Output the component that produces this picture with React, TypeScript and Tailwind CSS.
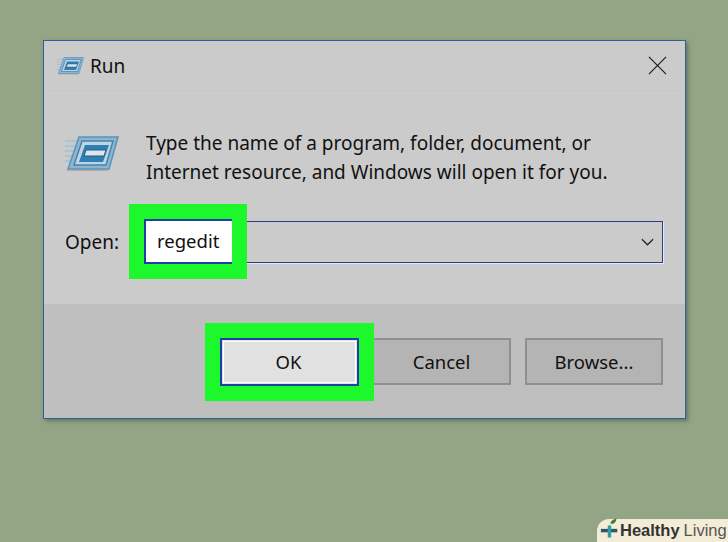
const font = "font-['Noto_Sans','Open_Sans',sans-serif]";

function RunIcon({ className }: { className: string }) {
  return (
    <svg viewBox="0 0 54 36" className={className}>
      <path d="M0 5h15M0 10h13M0 15h11M0 20h9M0 25h7" stroke="#a9c4d6" strokeWidth="2" />
      <path d="M14 1H53L44 33H3Z" fill="#8db5cf" stroke="#5b93b8" strokeWidth="1.5" />
      <path d="M44 33H3L1 35H43Z" fill="#9a9a9a" opacity="0.6" />
      <path d="M17 5H48L41 29H9Z" fill="#c3d3de" stroke="#3f86b4" strokeWidth="1.5" />
      <path d="M20 9H44L38 26H14Z" fill="#2f7fb4" />
      <path d="M21 14H41L39 20H19Z" fill="#dfe6ea" stroke="#1f5f8c" strokeWidth="1" />
    </svg>
  );
}

function DialogButton({ label, className }: { label: string; className: string }) {
  return <button className={`text-[18.5px] text-[#111] ${className}`}>{label}</button>;
}

export default function App() {
  return (
    <div className={`relative h-[542px] w-[728px] overflow-hidden bg-[#93a584] pl-[43px] pt-[40px] ${font}`}>
      <div className="flex h-[379px] w-[643px] flex-col border border-[#2f5f9f] bg-[#cbcbcb] shadow-[2px_2px_4px_rgba(50,70,60,0.5)]">
        <div className="flex h-[50px] items-center border-b border-[#c7c7c7] pl-[13px] pr-[18px]">
          <RunIcon className="h-[18px] w-[27px]" />
          <span className="ml-[6px] mt-[2px] text-[19px] leading-none text-[#111]">Run</span>
          <svg viewBox="0 0 20 20" className="ml-auto h-[19px] w-[19px]">
            <path d="M1 1L19 19M19 1L1 19" stroke="#1a1a1a" strokeWidth="1.2" fill="none" />
          </svg>
        </div>
        <div className="flex pl-[21px] pt-[38px]">
          <RunIcon className="mt-[7px] h-[36px] w-[54px]" />
          <p className="ml-[27px] text-[19px] leading-[29px] text-[#111]">
            Type the name of a program, folder, document, or
            <br />
            Internet resource, and Windows will open it for you.
          </p>
        </div>
        <div className="mt-[34px] flex items-center pl-[21px] pr-[22px]">
          <span className="w-[80px] text-[19px] text-[#111]">Open:</span>
          <div className="flex h-[42px] flex-1 items-center justify-between border border-[#28407f] pr-[8px] shadow-[1px_1px_0_#e4e8ef]">
            {/* green ring is the highlight the tutorial drew round the field */}
            <div className="relative -mb-[1px] -ml-[2px] -mt-[3px] flex h-[45px] w-[88px] items-center border-2 border-r-0 border-[#1c3fa8] bg-white pl-[11px] text-[18.5px] text-[#111] shadow-[0_0_0_15px_#1df82d]">
              regedit
            </div>
            <svg viewBox="0 0 14 8" className="h-[8px] w-[13px]">
              <path d="M1 1L7 7L13 1" stroke="#222" strokeWidth="1.3" fill="none" />
            </svg>
          </div>
        </div>
        <div className="mt-[41px] flex flex-1 items-start justify-end bg-[#bfbfbf] pr-[22px] pt-[34px]">
          <DialogButton
            label="OK"
            className="relative z-10 h-[48px] w-[139px] border-2 border-[#1c3fa8] bg-[#e1e1e1] pr-[2px] shadow-[0_0_0_15px_#1df82d] outline outline-1 -outline-offset-4 outline-white"
          />
          <DialogButton label="Cancel" className="ml-[13px] h-[47px] w-[139px] border-2 border-[#8f8f8f] bg-[#b4b4b4]" />
          <DialogButton label="Browse..." className="ml-[14px] h-[47px] w-[138px] border-2 border-[#8f8f8f] bg-[#b4b4b4]" />
        </div>
      </div>

      <div className="absolute bottom-0 right-0 flex h-[23px] w-[131px] items-center rounded-tl-[12px] bg-[#f3ecd6] pl-[3px] font-['Liberation_Sans',sans-serif] text-[16.5px] leading-none">
        <svg viewBox="0 0 22 24" className="-mt-[6px] h-[28px] w-[19px] shrink-0 overflow-visible">
          <path d="M1 15h19" stroke="#2c5a68" strokeWidth="4" />
          <path d="M11 9v14" stroke="#2f9ea5" strokeWidth="4" />
          <path d="M12 7C13 3 16 2 19 1C19 5 16 8 12 7Z" fill="#3d7a3a" />
        </svg>
        <span className="ml-[1px] font-bold text-[#333]">Healthy</span>
        <span className="ml-[4px] text-[#555]">Living</span>
      </div>
    </div>
  );
}
